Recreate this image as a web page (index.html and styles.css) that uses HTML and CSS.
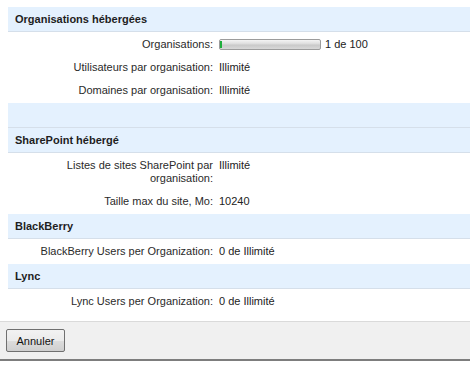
FILE: index.html
```html
<!DOCTYPE html>
<html lang="fr">
<head>
  <meta charset="UTF-8">
  <title>Quotas</title>
  <link rel="stylesheet" href="styles.css">
</head>
<body>
  <div class="quotas">
    <div class="section">
      <div class="section-head">Organisations hébergées</div>
      <div class="rows">
        <div class="label">Organisations:</div>
        <div class="value">
          <span class="gauge"><span class="gauge-fill"></span></span>
          <span>1 de 100</span>
        </div>
        <div class="label">Utilisateurs par organisation:</div>
        <div class="value">Illimité</div>
        <div class="label">Domaines par organisation:</div>
        <div class="value">Illimité</div>
      </div>
    </div>

    <div class="section">
      <div class="section-head"></div>
    </div>

    <div class="section">
      <div class="section-head">SharePoint hébergé</div>
      <div class="rows">
        <div class="label">Listes de sites SharePoint par organisation:</div>
        <div class="value">Illimité</div>
        <div class="label">Taille max du site, Mo:</div>
        <div class="value">10240</div>
      </div>
    </div>

    <div class="section">
      <div class="section-head">BlackBerry</div>
      <div class="rows">
        <div class="label">BlackBerry Users per Organization:</div>
        <div class="value">0 de Illimité</div>
      </div>
    </div>

    <div class="section">
      <div class="section-head">Lync</div>
      <div class="rows">
        <div class="label">Lync Users per Organization:</div>
        <div class="value">0 de Illimité</div>
      </div>
    </div>
  </div>

  <div class="footer">
    <button class="btn">Annuler</button>
  </div>
</body>
</html>
```

FILE: styles.css
```css
body {
  margin: 0;
  font-family: "Liberation Sans", Arial, sans-serif;
  font-size: 11px;
  color: #222;
  background-color: #fff;
}

.quotas {
  padding: 7px 0 7px 8px;
}

.section-head {
  height: 24px;
  line-height: 24px;
  padding-left: 7px;
  background-color: #e4f1fe;
  border-bottom: 1px solid #d5dfea;
  font-weight: bold;
  font-size: 11px;
  color: #1e1e1e;
}

.rows {
  display: grid;
  grid-template-columns: 205px 1fr;
  column-gap: 6px;
  padding: 1px 0;
}

.label,
.value {
  padding: 5px 0;
  line-height: 13px;
}

.label {
  text-align: right;
  padding-left: 32px;
  color: #2a2a2a;
}

.value {
  display: flex;
  align-items: center;
  gap: 4px;
  align-self: start;
}

.gauge {
  display: inline-block;
  width: 100px;
  height: 9px;
  border: 1px solid #9c9c9c;
  border-radius: 2px;
  background: linear-gradient(#f4f4f4, #dcdcdc 45%, #c9c9c9 55%, #d8d8d8);
  position: relative;
}

.gauge-fill {
  position: absolute;
  left: 0;
  top: 1px;
  bottom: 1px;
  width: 2px;
  background-color: #1fae3c;
}

.footer {
  height: 40px;
  padding: 7px 0 0 6px;
  box-sizing: border-box;
  background-color: #f0f0f0;
  border-top: 1px solid #dadada;
  border-bottom: 2px solid #7d7d7d;
}

.btn {
  width: 59px;
  height: 23px;
  font-family: "Liberation Sans", Arial, sans-serif;
  font-size: 11px;
  color: #111;
  border: 1px solid #707070;
  border-radius: 2px;
  background: linear-gradient(#f2f2f2, #ebebeb 50%, #dddddd 51%, #cfcfcf);
  padding: 0;
}
```
